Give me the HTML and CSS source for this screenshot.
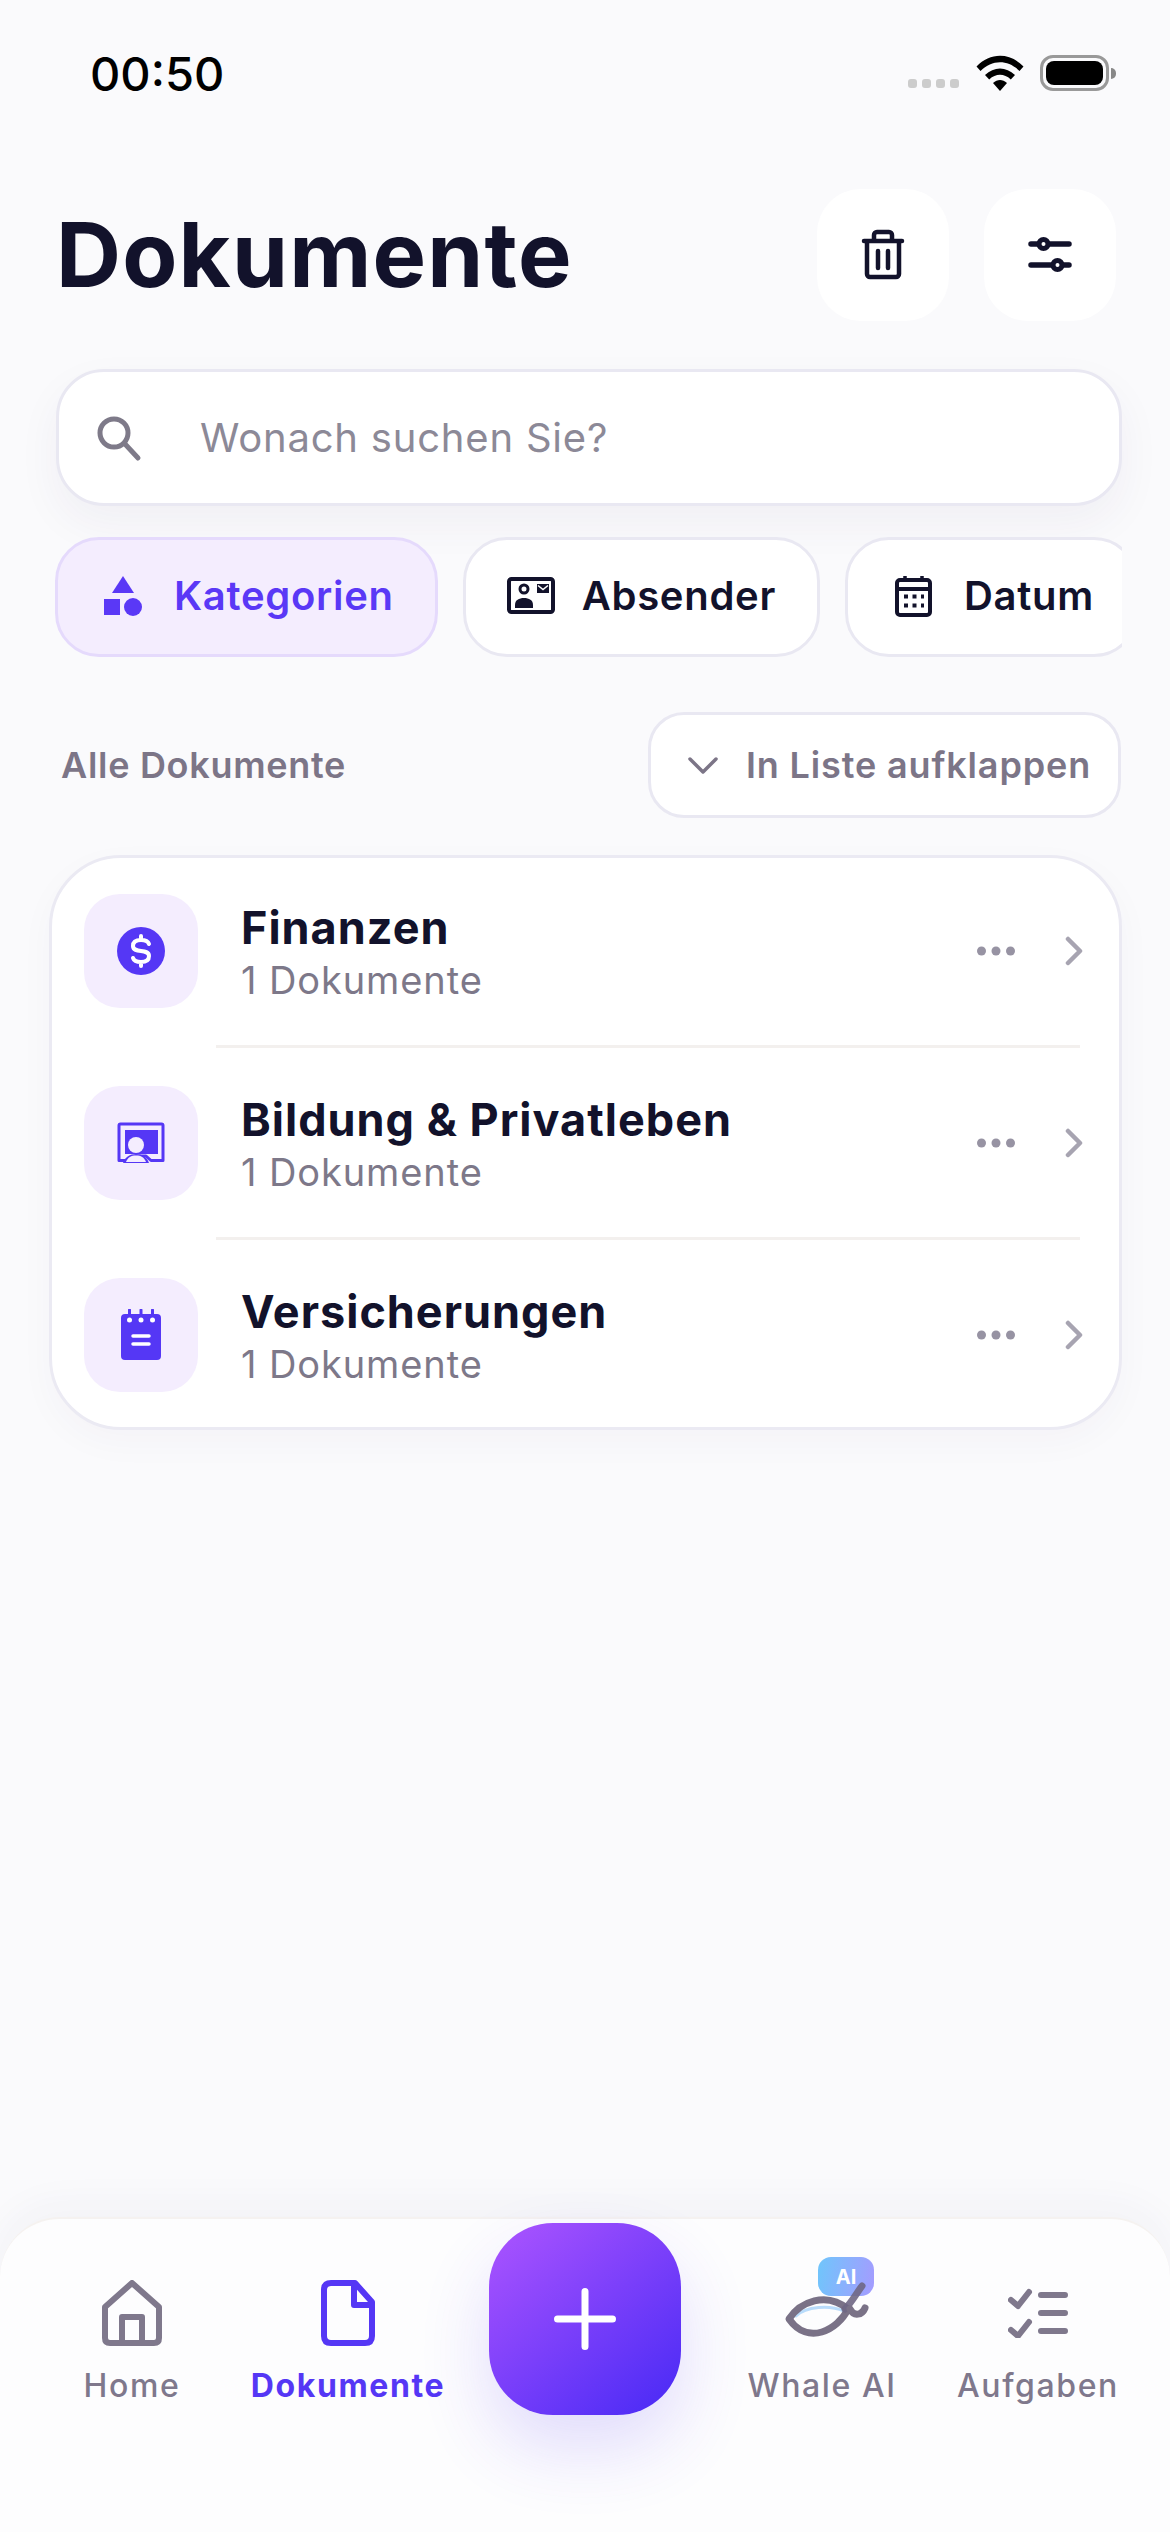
FILE: index.html
```html
<!DOCTYPE html>
<html lang="de">
<head>
    <meta charset="UTF-8">
    <meta name="viewport" content="width=device-width, initial-scale=1.0">
    <title>Dokumente</title>
    <link rel="stylesheet" href="styles.css">
</head>
<body>
    <div class="page">
        <div class="status-bar">
            <span class="time">00:50</span>
            <div class="status-icons">
                <div class="signal"><i></i><i></i><i></i><i></i></div>
                <svg class="wifi" width="48" height="36" viewBox="0 0 48 36">
                    <path d="M0.5 11.5C14 -2.8 34 -2.8 47.5 11.5L43.5 16C32 4.3 16 4.3 4.5 16Z" fill="#000"/>
                    <path d="M9 20C18 11.2 30 11.2 39 20L34.8 24.4C28 18.2 20 18.2 13.2 24.4Z" fill="#000"/>
                    <path d="M17 28C21.5 24 26.5 24 31 28L24 36Z" fill="#000"/>
                </svg>
                <div class="battery"><div class="battery-level"></div></div>
                <div class="battery-tip"></div>
            </div>
        </div>

        <header class="top">
            <h1>Dokumente</h1>
            <div class="top-actions">
                <button class="square-btn">
                    <svg width="48" height="54" viewBox="0 0 48 54" fill="none" stroke="#12122b" stroke-width="4.5" stroke-linecap="round" stroke-linejoin="round">
                        <path d="M5 13H43"/>
                        <path d="M15 12V7a3 3 0 0 1 3-3H30a3 3 0 0 1 3 3V12"/>
                        <path d="M8 14V46a3 3 0 0 0 3 3H37a3 3 0 0 0 3-3V14"/>
                        <path d="M19 23V40M29 23V40"/>
                    </svg>
                </button>
                <button class="square-btn">
                    <svg width="48" height="40" viewBox="0 0 48 40" fill="none" stroke="#12122b" stroke-width="5.5" stroke-linecap="round">
                        <path d="M5 9H12M23 9H43"/>
                        <circle cx="17.500" cy="9" r="4.500" stroke-width="5"/>
                        <path d="M5 30H26M37 30H43"/>
                        <circle cx="31.500" cy="30" r="4.500" stroke-width="5"/>
                    </svg>
                </button>
            </div>
        </header>

        <div class="search">
            <svg width="48" height="48" viewBox="0 0 48 48" fill="none" stroke="#7e7a89" stroke-width="5" stroke-linecap="round">
                <circle cx="20" cy="19" r="14"/>
                <path d="M31 30L44 44"/>
            </svg>
            <span class="search-text">Wonach suchen Sie?</span>
        </div>

        <div class="chips">
            <div class="chip chip-active">
                <svg width="48" height="48" viewBox="0 0 48 48" fill="#5a38f6">
                    <path d="M24 4L35 21H13Z"/>
                    <rect x="5" y="27" width="16" height="16"/>
                    <circle cx="34" cy="35" r="9"/>
                </svg>
                <span>Kategorien</span>
            </div>
            <div class="chip">
                <svg width="48" height="48" viewBox="0 0 48 48" fill="none">
                    <rect x="2" y="7" width="44" height="33" rx="2.5" stroke="#12122b" stroke-width="4"/>
                    <circle cx="17" cy="17" r="4" stroke="#12122b" stroke-width="3"/>
                    <path d="M8 36V33C8 28 12 26 17 26S26 28 26 33V36Z" fill="#12122b"/>
                    <rect x="30" y="12" width="12" height="9" fill="#12122b"/>
                    <path d="M31 13.5L36 17.5L41 13.5" stroke="#fff" stroke-width="1.6"/>
                </svg>
                <span>Absender</span>
            </div>
            <div class="chip">
                <svg width="48" height="48" viewBox="0 0 48 48" fill="none" stroke="#12122b" stroke-width="4">
                    <rect x="8" y="8" width="33" height="35" rx="3"/>
                    <path d="M8 17H41"/>
                    <path d="M16 4V9M33 4V9" stroke-width="3.5"/>
                    <path d="M15 24.500H35M15 33.500H35" stroke-width="4" stroke-dasharray="4 4.500"/>
                </svg>
                <span>Datum</span>
            </div>
        </div>

        <div class="section-head">
            <span class="section-title">Alle Dokumente</span>
            <button class="expand-btn">
                <svg width="30" height="18" viewBox="0 0 30 18" fill="none" stroke="#7c7587" stroke-width="3.500" stroke-linecap="round" stroke-linejoin="round">
                    <path d="M2 3L15 16L28 3"/>
                </svg>
                <span>In Liste aufklappen</span>
            </button>
        </div>

        <div class="card">
            <div class="row row-first">
                <div class="tile">
                    <svg width="48" height="50" viewBox="0 0 48 50">
                        <circle cx="24" cy="25" r="24" fill="#5537f5"/>
                        <path d="M32 18C31 15 28 14 24 14C19 14 16 16 16 20C16 28 32 22 32 30C32 34 29 36 24 36C20 36 17 35 16 32M24 10V14M24 36V40" fill="none" stroke="#fff" stroke-width="4" stroke-linecap="round"/>
                    </svg>
                </div>
                <div class="row-text">
                    <div class="row-title">Finanzen</div>
                    <div class="row-sub">1 Dokumente</div>
                </div>
                <svg class="dots" width="38" height="10" viewBox="0 0 38 10" fill="#9793a3"><circle cx="4.500" cy="5" r="4.500"/><circle cx="19" cy="5" r="4.500"/><circle cx="33.500" cy="5" r="4.500"/></svg>
                <svg class="chevron" width="18" height="30" viewBox="0 0 18 30" fill="none" stroke="#a7a4b1" stroke-width="4.500" stroke-linecap="round" stroke-linejoin="round"><path d="M3 3L15 15L3 27"/></svg>
            </div>
            <div class="divider"></div>
            <div class="row">
                <div class="tile">
                    <svg width="48" height="42" viewBox="0 0 48 42">
                        <path d="M2 38.500V3.500Q2 2 3.500 2H44.500Q46 2 46 3.500V38.500H34L29 34H19L14 38.500Z" fill="none" stroke="#5537f5" stroke-width="3" stroke-linejoin="round"/>
                        <path d="M8 8H41V32H8Z" fill="#5537f5"/>
                        <circle cx="19" cy="23" r="8" fill="#f4edfe"/>
                        <path d="M6 41C8 35 13 32 19 32S30 35 32 41Z" fill="#5537f5"/>
                        <path d="M9 40C11 35 14 33.500 19 33.500S27 35 29 40" fill="#f4edfe"/>
                    </svg>
                </div>
                <div class="row-text">
                    <div class="row-title">Bildung &amp; Privatleben</div>
                    <div class="row-sub">1 Dokumente</div>
                </div>
                <svg class="dots" width="38" height="10" viewBox="0 0 38 10" fill="#9793a3"><circle cx="4.500" cy="5" r="4.500"/><circle cx="19" cy="5" r="4.500"/><circle cx="33.500" cy="5" r="4.500"/></svg>
                <svg class="chevron" width="18" height="30" viewBox="0 0 18 30" fill="none" stroke="#a7a4b1" stroke-width="4.500" stroke-linecap="round" stroke-linejoin="round"><path d="M3 3L15 15L3 27"/></svg>
            </div>
            <div class="divider"></div>
            <div class="row row-last">
                <div class="tile">
                    <svg width="42" height="52" viewBox="0 0 42 52">
                        <path d="M1 9Q1 5 5 5H37Q41 5 41 9V47Q41 51 37 51H5Q1 51 1 47Z" fill="#5537f5"/>
                        <path d="M9.500 1V6M21 1V6M32.500 1V6" stroke="#5537f5" stroke-width="3" stroke-linecap="round"/>
                        <circle cx="9.500" cy="11" r="2.500" fill="#fff"/>
                        <circle cx="21" cy="11" r="2.500" fill="#fff"/>
                        <circle cx="32.500" cy="11" r="2.500" fill="#fff"/>
                        <path d="M13 27H29M13 35H29" stroke="#fff" stroke-width="3.500" stroke-linecap="round"/>
                    </svg>
                </div>
                <div class="row-text">
                    <div class="row-title">Versicherungen</div>
                    <div class="row-sub">1 Dokumente</div>
                </div>
                <svg class="dots" width="38" height="10" viewBox="0 0 38 10" fill="#9793a3"><circle cx="4.500" cy="5" r="4.500"/><circle cx="19" cy="5" r="4.500"/><circle cx="33.500" cy="5" r="4.500"/></svg>
                <svg class="chevron" width="18" height="30" viewBox="0 0 18 30" fill="none" stroke="#a7a4b1" stroke-width="4.500" stroke-linecap="round" stroke-linejoin="round"><path d="M3 3L15 15L3 27"/></svg>
            </div>
        </div>

        <nav class="tabbar">
            <div class="tab">
                <div class="tab-icon">
                    <svg width="60" height="66" viewBox="0 0 60 66" fill="none" stroke="#7f788c" stroke-width="6" stroke-linejoin="round">
                        <path d="M30 3L57 27V58Q57 63 52 63H8Q3 63 3 58V27Z"/>
                        <path d="M20 63V37H40V63"/>
                    </svg>
                </div>
                <span>Home</span>
            </div>
            <div class="tab tab-active">
                <div class="tab-icon">
                    <svg width="54" height="66" viewBox="0 0 54 66" fill="none" stroke="#5537f5" stroke-width="6" stroke-linejoin="round">
                        <path d="M3 10Q3 3 10 3H34L51 22V56Q51 63 44 63H10Q3 63 3 56Z"/>
                        <path d="M33 3V25H51"/>
                    </svg>
                </div>
                <span>Dokumente</span>
            </div>
            <div class="fab-cell">
                <button class="fab">
                    <svg width="62" height="62" viewBox="0 0 62 62" fill="none" stroke="#fff" stroke-width="7" stroke-linecap="round">
                        <path d="M31 3.500V58.500M3.500 31H58.500"/>
                    </svg>
                </button>
            </div>
            <div class="tab">
                <div class="tab-icon tab-icon-whale">
                    <span class="ai-badge">AI</span>
                    <svg class="whale" width="100" height="66" viewBox="0 0 100 66" fill="none" stroke-linecap="round" stroke-linejoin="round">
                        <path d="M24 36C34 26 58 25 72 31" stroke="#b9dcfb" stroke-width="3"/>
                        <path d="M17 39C28 22 54 11 76 29C66 50 36 66 17 39Z" stroke="#7a7287" stroke-width="7"/>
                        <path d="M73 29C80 22 84 14 90 6" stroke="#6f6784" stroke-opacity=".9" stroke-width="7"/>
                        <path d="M78 29C82 37 90 35 93 28" stroke="#7a7287" stroke-width="7"/>
                    </svg>
                </div>
                <span>Whale AI</span>
            </div>
            <div class="tab">
                <div class="tab-icon">
                    <svg width="60" height="50" viewBox="0 0 60 50" fill="none" stroke="#7f788c" stroke-linecap="round" stroke-linejoin="round">
                        <path d="M3 12L10 18L21 4M3 42L10 48L21 34" stroke-width="6"/>
                        <path d="M33 7H57M33 25H57M33 43H57" stroke-width="6"/>
                    </svg>
                </div>
                <span>Aufgaben</span>
            </div>
        </nav>
    </div>
</body>
</html>
```
FILE: styles.css
```css
* {
    box-sizing: border-box;
}
body {
    margin: 0;
    background: #fafafc;
    font-family: Inter, "Noto Sans", sans-serif;
    font-optical-sizing: none;
    color: #12122b;
}
button {
    font-family: inherit;
    padding: 0;
    border: none;
    background: #fff;
}
.page {
    width: 1170px;
    height: 2532px;
    display: flex;
    flex-direction: column;
    overflow: hidden;
}

/* Status bar */
.status-bar {
    height: 189px;
    padding: 54px 54px 0 90px;
    display: flex;
    justify-content: space-between;
    align-items: flex-start;
}
.time {
    font-size: 47px;
    line-height: 40px;
    font-weight: 550;
    color: #000;
}
.status-icons {
    display: flex;
    align-items: center;
    height: 38px;
}
.signal {
    display: flex;
    gap: 5px;
    margin-top: 21px;
    margin-right: 17px;
}
.signal i {
    width: 9px;
    height: 9px;
    border-radius: 3px;
    background: #cccccc;
}
.wifi {
    margin-right: 16px;
}
.battery {
    width: 69px;
    height: 36px;
    padding: 3px;
    border: 3px solid #999;
    border-radius: 13px;
}
.battery-level {
    height: 100%;
    background: #000;
    border-radius: 8px;
}
.battery-tip {
    width: 5px;
    height: 11px;
    margin-left: 2px;
    background: #888;
    border-radius: 0 5px 5px 0;
}

/* Title */
.top {
    height: 132px;
    padding: 0 54px 0 56px;
    display: flex;
    justify-content: space-between;
    align-items: center;
}
h1 {
    margin: 0;
    font-size: 90px;
    font-weight: 700;
    line-height: 100px;
    letter-spacing: 1.2px;
}
.top-actions {
    display: flex;
    gap: 35px;
}
.square-btn {
    width: 132px;
    height: 132px;
    border-radius: 44px;
    display: flex;
    align-items: center;
    justify-content: center;
}

/* Search */
.search {
    width: 1066px;
    height: 137px;
    margin: 48px 0 0 56px;
    padding-left: 35px;
    display: flex;
    align-items: center;
    gap: 58px;
    background: #fff;
    border: 3px solid #e9e8f2;
    border-radius: 48px;
    box-shadow: 0 18px 44px rgba(50, 40, 100, 0.05);
}
.search-text {
    font-size: 40px;
    letter-spacing: 0.8px;
    color: #8c8997;
}

/* Filter chips */
.chips {
    width: 1122px;
    height: 120px;
    margin-top: 31px;
    padding-left: 55px;
    display: flex;
    gap: 25px;
    overflow: hidden;
}
.chip {
    height: 120px;
    flex-shrink: 0;
    padding: 0 41px 3px;
    display: flex;
    align-items: center;
    gap: 27px;
    background: #fff;
    border: 3px solid #e9e8f2;
    border-radius: 44px;
    font-size: 40px;
    letter-spacing: 0.7px;
    font-weight: 600;
}
.chip-active {
    background: #f4edfe;
    border-color: #e5dafc;
    color: #5a38f6;
}

/* Section head */
.section-head {
    height: 106px;
    margin-top: 55px;
    padding: 0 49px 0 61px;
    display: flex;
    justify-content: space-between;
    align-items: center;
}
.section-title {
    font-size: 36px;
    letter-spacing: 0.7px;
    font-weight: 600;
    color: #7c7587;
}
.expand-btn {
    width: 473px;
    height: 106px;
    padding-left: 37px;
    display: flex;
    align-items: center;
    gap: 28px;
    border: 3px solid #e9e8f2;
    border-radius: 36px;
    font-size: 36px;
    letter-spacing: 0.85px;
    font-weight: 600;
    color: #7c7587;
}

/* Card */
.card {
    width: 1073px;
    margin: 37px 0 0 49px;
    background: #fff;
    border: 3px solid #ebeaf3;
    border-radius: 72px;
    box-shadow: 0 12px 36px rgba(50, 40, 100, 0.03);
}
.row {
    padding: 38px 36px 37px 32px;
    display: flex;
    align-items: center;
}
.row-first {
    padding-top: 36px;
}
.row-last {
    padding-bottom: 35px;
}
.divider {
    height: 3px;
    margin: 0 39px 0 164px;
    background: #f3f0ee;
}
.tile {
    width: 114px;
    height: 114px;
    margin-right: 43px;
    flex-shrink: 0;
    display: flex;
    align-items: center;
    justify-content: center;
    background: #f4edfe;
    border-radius: 36px;
}
.row-text {
    flex: 1;
    padding-top: 3px;
}
.row-title {
    font-size: 45px;
    letter-spacing: 1px;
    line-height: 52px;
    font-weight: 650;
}
.row-sub {
    margin-top: 3px;
    font-size: 38px;
    letter-spacing: 0.9px;
    line-height: 46px;
    color: #7d7889;
}
.chevron {
    margin-left: 50px;
}

/* Tab bar */
.tabbar {
    height: 315px;
    margin-top: auto;
    padding: 4px 24px 0;
    display: grid;
    grid-template-columns: 216px 216px 258px 216px 216px;
    align-items: start;
    background: #fdfdfe;
    border-top: 2px solid #f5f2f0;
    border-radius: 60px 60px 0 0;
    box-shadow: 0 -12px 40px rgba(60, 50, 90, 0.04);
}
.tab {
    padding-top: 57px;
    display: flex;
    flex-direction: column;
    align-items: center;
    font-size: 32px;
    line-height: 40px;
    font-weight: 500;
    letter-spacing: 1.6px;
    color: #7f788c;
}
.tab-active {
    font-weight: 700;
    color: #5537f5;
}
.tab-icon {
    position: relative;
    height: 66px;
    margin-bottom: 20px;
    display: flex;
    align-items: center;
    justify-content: center;
}
.tab-icon-whale {
    width: 100px;
}
.whale {
    position: relative;
}
.ai-badge {
    position: absolute;
    left: 46px;
    top: -23px;
    width: 56px;
    height: 39px;
    display: flex;
    align-items: center;
    justify-content: center;
    background: linear-gradient(100deg, #6fc6fb, #a59bff);
    border-radius: 13px;
    font-size: 20px;
    font-weight: 700;
    letter-spacing: 0;
    color: #fff;
}
.fab-cell {
    display: flex;
    justify-content: center;
}
.fab {
    width: 192px;
    height: 192px;
    display: flex;
    align-items: center;
    justify-content: center;
    background: linear-gradient(140deg, #ad55ff, #4729f5);
    border-radius: 64px;
    box-shadow: 0 34px 70px rgba(80, 50, 245, 0.16);
}
```
